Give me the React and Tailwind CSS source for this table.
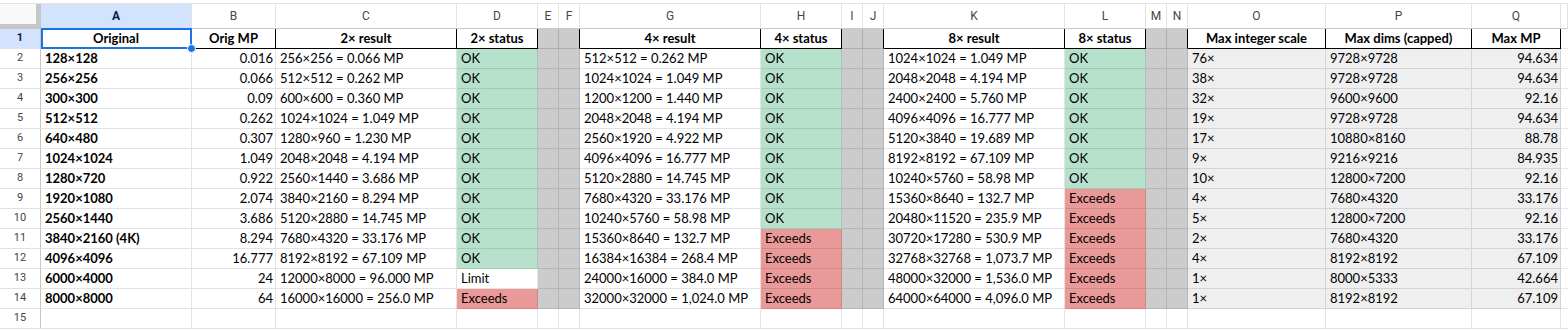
const letters = ['A','B','C','D','E','F','G','H','I','J','K','L','M','N','O','P','Q','']

const heads = ['Original','Orig MP','2× result','2× status','','','4× result','4× status','','','8× result','8× status','','','Max integer scale','Max dims (capped)','Max MP']

const data = [
  ['128×128','0.016','256×256 = 0.066 MP','OK','512×512 = 0.262 MP','OK','1024×1024 = 1.049 MP','OK','76×','9728×9728','94.634'],
  ['256×256','0.066','512×512 = 0.262 MP','OK','1024×1024 = 1.049 MP','OK','2048×2048 = 4.194 MP','OK','38×','9728×9728','94.634'],
  ['300×300','0.09','600×600 = 0.360 MP','OK','1200×1200 = 1.440 MP','OK','2400×2400 = 5.760 MP','OK','32×','9600×9600','92.16'],
  ['512×512','0.262','1024×1024 = 1.049 MP','OK','2048×2048 = 4.194 MP','OK','4096×4096 = 16.777 MP','OK','19×','9728×9728','94.634'],
  ['640×480','0.307','1280×960 = 1.230 MP','OK','2560×1920 = 4.922 MP','OK','5120×3840 = 19.689 MP','OK','17×','10880×8160','88.78'],
  ['1024×1024','1.049','2048×2048 = 4.194 MP','OK','4096×4096 = 16.777 MP','OK','8192×8192 = 67.109 MP','OK','9×','9216×9216','84.935'],
  ['1280×720','0.922','2560×1440 = 3.686 MP','OK','5120×2880 = 14.745 MP','OK','10240×5760 = 58.98 MP','OK','10×','12800×7200','92.16'],
  ['1920×1080','2.074','3840×2160 = 8.294 MP','OK','7680×4320 = 33.176 MP','OK','15360×8640 = 132.7 MP','Exceeds','4×','7680×4320','33.176'],
  ['2560×1440','3.686','5120×2880 = 14.745 MP','OK','10240×5760 = 58.98 MP','OK','20480×11520 = 235.9 MP','Exceeds','5×','12800×7200','92.16'],
  ['3840×2160 (4K)','8.294','7680×4320 = 33.176 MP','OK','15360×8640 = 132.7 MP','Exceeds','30720×17280 = 530.9 MP','Exceeds','2×','7680×4320','33.176'],
  ['4096×4096','16.777','8192×8192 = 67.109 MP','OK','16384×16384 = 268.4 MP','Exceeds','32768×32768 = 1,073.7 MP','Exceeds','4×','8192×8192','67.109'],
  ['6000×4000','24','12000×8000 = 96.000 MP','Limit','24000×16000 = 384.0 MP','Exceeds','48000×32000 = 1,536.0 MP','Exceeds','1×','8000×5333','42.664'],
  ['8000×8000','64','16000×16000 = 256.0 MP','Exceeds','32000×32000 = 1,024.0 MP','Exceeds','64000×64000 = 4,096.0 MP','Exceeds','1×','8192×8192','67.109'],
]

// spread the 11 values over columns A..Q, leaving the grey spacer columns empty
const expand = (r) => [r[0], r[1], r[2], r[3], '', '', r[4], r[5], '', '', r[6], r[7], '', '', r[8], r[9], r[10]]

const spacer = [4, 5, 8, 9, 12, 13]
const status = [3, 7, 11]

function HeaderRow() {
  return (
    <>
      <div className="h-[25px] bg-[#f8f9fa] border-r-[5px] border-b-[5px] border-[#c4c7c5]" />
      {letters.map((l, i) => (
        <div
          key={i}
          className={`h-[25px] border-r border-b border-r-[#e1e3e1] border-b-[#c4c7c5] flex items-center justify-center text-[12px] font-['Roboto','Liberation_Sans',sans-serif] ${
            i === 0 ? 'bg-[#d3e3fd] text-[#041e49] font-bold' : 'bg-white text-[#444746]'
          }`}
        >
          {l}
        </div>
      ))}
    </>
  )
}

function RowNum({ n, active }) {
  return (
    <div
      className={`h-5 border-r border-b border-r-[#c4c7c5] border-b-[#e1e3e1] flex items-center justify-center text-[11px] font-['Roboto','Liberation_Sans',sans-serif] ${
        active ? 'bg-[#d3e3fd] text-[#041e49] font-bold' : 'bg-white text-[#444746]'
      }`}
    >
      {n}
    </div>
  )
}

function TitleRow() {
  return (
    <>
      <RowNum n={1} active />
      {heads.map((h, i) => {
        const gray = spacer.includes(i)
        const nextText = i + 1 < heads.length && heads[i + 1] !== ''
        const edge = !gray || nextText ? 'border-r-black' : 'border-r-black/15'
        if (i === 0) {
          return (
            <div key={i} className="relative h-5 border-r border-b border-r-black border-b-black flex items-center justify-center font-bold">
              {h}
              <div className="absolute -top-px left-0 -right-px -bottom-px border-2 border-[#1a73e8] pointer-events-none" />
              <div className="absolute -right-[5px] -bottom-[5px] w-[9px] h-[9px] rounded-full bg-[#1a73e8] border border-white z-10" />
            </div>
          )
        }
        return (
          <div
            key={i}
            className={`h-5 border-r border-b ${edge} ${gray ? 'bg-[#cccccc] border-b-black/15' : 'bg-white border-b-black'} flex items-center justify-center font-bold whitespace-nowrap overflow-hidden`}
          >
            {h}
          </div>
        )
      })}
      <div className="h-5 border-b border-black/10 bg-white" />
    </>
  )
}

function DataRow({ n, cells }) {
  return (
    <>
      <RowNum n={n} />
      {cells.map((v, i) => {
        let bg = 'bg-white'
        if (spacer.includes(i)) bg = 'bg-[#cccccc]'
        else if (status.includes(i)) bg = v === 'OK' ? 'bg-[#b7e1cd]' : v === 'Exceeds' ? 'bg-[#ea9999]' : 'bg-white'
        else if (i >= 14) bg = 'bg-[#efefef]'
        const right = i === 1 || i === 16
        return (
          <div
            key={i}
            className={`h-5 border-r border-b border-black/[0.11] ${bg} flex items-center whitespace-nowrap overflow-hidden ${
              right ? 'justify-end pr-[2px]' : 'pl-[4px]'
            } ${i === 0 ? 'font-bold' : ''}`}
          >
            {v}
          </div>
        )
      })}
      <div className="h-5 border-b border-black/10 bg-white" />
    </>
  )
}

function EmptyRow({ n }) {
  return (
    <>
      <RowNum n={n} />
      {letters.map((_, i) => (
        <div key={i} className={`h-5 bg-white border-b border-black/[0.11] ${i < 17 ? 'border-r' : ''}`} />
      ))}
    </>
  )
}

export default function App() {
  return (
    <div className="w-[1568px] h-[330px] bg-white overflow-hidden pt-[3px]">
      <div className="border-t border-[#e1e3e1] grid grid-cols-[41px_151px_84px_181px_81px_21px_21px_181px_81px_21px_21px_181px_81px_21px_21px_138px_146px_89px_1fr] text-[13px] text-black font-['Lato',sans-serif]">
        <HeaderRow />
        <TitleRow />
        {data.map((r, i) => (
          <DataRow key={i} n={i + 2} cells={expand(r)} />
        ))}
        <EmptyRow n={15} />
      </div>
    </div>
  )
}
